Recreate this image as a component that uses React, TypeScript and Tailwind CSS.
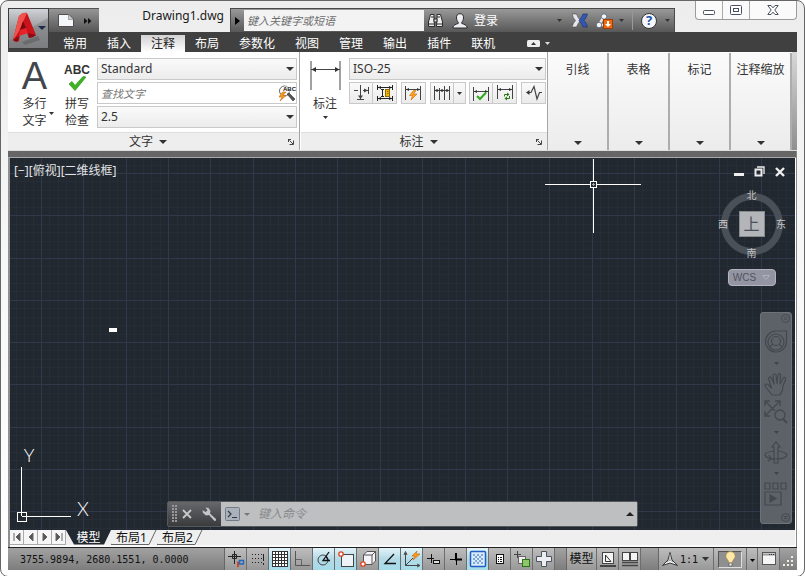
import type { ReactNode } from "react";

const UI = "font-['Noto_Sans','Noto_Sans_CJK_SC',sans-serif]";

function Caret({ w = 7, color = "#333", className = "" }: { w?: number; color?: string; className?: string }) {
  const h = Math.ceil(w / 2);
  return (
    <svg width={w} height={h} viewBox={`0 0 ${w} ${h}`} className={`pointer-events-none shrink-0 ${className}`} aria-hidden="true">
      <path d={`M0 0H${w}L${w / 2} ${h}Z`} fill={color} />
    </svg>
  );
}

function AppButton() {
  return (
    <button
      aria-label="应用程序菜单"
      className="absolute left-0 top-[7px] z-10 h-[41px] w-[41px] border border-[#3c3c3c] bg-linear-to-b from-[#cfd2d6] via-[#9a9b9e] to-[#7d7e80]"
    >
      <svg width="39" height="39" viewBox="0 0 39 39" aria-hidden="true">
        <path d="M0 32L39 9V39H0Z" fill="#77797c" opacity=".45" />
        <path d="M13 33L29 27L31 31L16 36Z" fill="#555" opacity=".5" />
        <path d="M10 7Q14 3 18 4L27 26Q24 29 20 29L18 24L11 26L10 32Q7 34 4 31Z" fill="#c9141b" />
        <path d="M10 7Q14 3 18 4L14 13Q10 24 4 31Z" fill="#f0524c" />
        <path d="M14 12L17 19L11 21Z" fill="#7a0a10" />
        <path d="M11 21L17 19L19 24L10 27Z" fill="#e8222a" />
        <path d="M10 27L9 32Q7 34 4 31Q8 28 10 27ZM19 24L27 26Q24 29 20 29Z" fill="#8a0c12" />
        <path d="M29 17H37L33 21Z" fill="#1c2a48" />
      </svg>
    </button>
  );
}

function WindowButtons() {
  return (
    <div className="flex h-[19px] w-[102px] shrink-0 self-start rounded-b-[4px] border border-t-0 border-[#9b9b9b] bg-[#fafafa]">
      <button aria-label="最小化" className="flex w-[27px] items-center justify-center border-r border-[#aaa]">
        <svg width="12" height="5" viewBox="0 0 12 5" className="mt-1"><rect x=".5" y=".5" width="11" height="4" rx="1" fill="#fff" stroke="#4b5060" /></svg>
      </button>
      <button aria-label="最大化" className="flex w-[27px] items-center justify-center border-r border-[#aaa]">
        <svg width="12" height="10" viewBox="0 0 12 10"><rect x=".5" y=".5" width="11" height="9" rx="1" fill="#fff" stroke="#4b5060" /><rect x="3.5" y="3.5" width="5" height="3" fill="#fff" stroke="#4b5060" /></svg>
      </button>
      <button aria-label="关闭" className="flex flex-1 items-center justify-center">
        <svg width="12" height="10" viewBox="0 0 12 10"><path d="M.8 .5H4L6 2.8L8 .5H11.2L7.8 5L11.2 9.5H8L6 7.2L4 9.5H.8L4.2 5Z" fill="#fff" stroke="#4b5060" /></svg>
      </button>
    </div>
  );
}

function TitleRow() {
  return (
    <div className="flex h-[31px] items-end pl-[41px]">
      <div className="flex h-6 w-[50px] shrink-0 items-center gap-2.5 border-t border-[#555] bg-linear-to-b from-[#969696] to-[#565656] pl-[9px]">
        <button aria-label="新建">
          <svg width="16" height="13" viewBox="0 0 16 13"><path d="M.5 .5H11L15.5 5V12.5H.5Z" fill="#f6f7f9" stroke="#4c4f55" /><path d="M10.500 .5V5.500H15.5Z" fill="#c9ccd2" stroke="#777" strokeWidth=".6" /></svg>
        </button>
        <button aria-label="更多">
          <svg width="8" height="6" viewBox="0 0 8 6"><path d="M0 0L3.500 3L0 6ZM4 0L7.500 3L4 6Z" fill="#111" /></svg>
        </button>
      </div>
      <h1 className="flex-1 self-start whitespace-nowrap pt-1.5 pr-1.5 text-right text-[12px] leading-[18px] text-[#1a1a1a]">Drawing1.dwg</h1>
      <div className="flex h-6 w-[445px] shrink-0 items-center border border-b-0 border-[#4a4a4a] bg-linear-to-b from-[#999] to-[#585858]">
        <button aria-label="展开搜索" className="flex w-[13px] justify-center">
          <svg width="5" height="8" viewBox="0 0 5 8"><path d="M0 0L5 4L0 8Z" fill="#000" /></svg>
        </button>
        <input
          aria-label="键入关键字或短语"
          placeholder="键入关键字或短语"
          className="h-[21px] w-[180px] bg-[#f3f3f4] px-[3px] text-[11px] italic outline-none placeholder:text-[#6c6c6c]"
        />
        <button aria-label="搜索" className="ml-[3px]">
          <svg width="17" height="16" viewBox="0 0 17 16"><path d="M3.500 1.500H7V5L7.500 13.500H1.500V9ZM13.500 1.500H10V5L9.500 13.500H15.500V9Z" fill="#eee" stroke="#2b2b2b" /><path d="M7 6H10V9H7Z" fill="#ddd" stroke="#2b2b2b" /><path d="M2 11H7M10 11H15M4 4H7M10 4H13" stroke="#2b2b2b" /></svg>
        </button>
        <button className="ml-2 flex items-center gap-1.5 text-[12px] leading-4 text-white">
          <svg width="16" height="16" viewBox="0 0 16 16"><path d="M8 .7C10.600 .7 11.700 2.500 11.500 5C11.400 7 10.500 8.400 9.800 9.200V10.500C12 11.300 15 12 15.300 15H.7C1 12 4 11.300 6.200 10.500V9.200C5.500 8.400 4.600 7 4.500 5C4.300 2.500 5.400 .7 8 .7Z" fill="#eceef1" stroke="#2b2b2b" /></svg>
          登录
        </button>
        <div className="ml-auto flex items-center">
          <Caret w={5} className="mr-2.5" />
          <button aria-label="Exchange">
            <svg width="16" height="15" viewBox="0 0 16 15"><path d="M0 1H4.500Q6 5 8.500 7.500Q6 10 4.500 14H0Q1 10 3.500 7.500Q1 5 0 1Z" fill="#e5e7ec" stroke="#444" strokeWidth=".6" /><path d="M15.500 1H11Q9.500 5 7 7.500Q9.500 10 11 14H15.500Q14.500 10 12 7.500Q14.500 5 15.500 1Z" fill="#3157b4" stroke="#1c2e66" strokeWidth=".6" /></svg>
          </button>
          <button aria-label="连接" className="ml-2 flex items-center gap-1.5">
            <svg width="17" height="16" viewBox="0 0 17 16"><path d="M7.500 4L3 12H11" fill="none" stroke="#e8eaee" strokeWidth="2.500" /><circle cx="8" cy="3.500" r="2.700" fill="#f4f5f8" stroke="#456" strokeWidth=".7" /><circle cx="3" cy="12" r="2.700" fill="#f4f5f8" stroke="#456" strokeWidth=".7" /><rect x="7.500" y="6.500" width="9" height="9" fill="#ee6a12" stroke="#a23c00" /><path d="M11 8H13V11H15L12 14L9 11H11Z" fill="#fff" /></svg>
            <Caret w={5} />
          </button>
          <span className="mx-2 h-[18px] w-px bg-[#999]" />
          <button aria-label="帮助" className="mr-1 flex items-center gap-2">
            <span className="flex h-4 w-4 items-center justify-center rounded-full border border-[#333] bg-[#f5f7fa] text-[13px] font-bold leading-none text-[#1e53ad]">?</span>
            <Caret w={5} />
          </button>
        </div>
      </div>
      <div className="w-5 shrink-0" />
      <WindowButtons />
    </div>
  );
}

const TABS = ["常用", "插入", "注释", "布局", "参数化", "视图", "管理", "输出", "插件", "联机"];

function TabRow() {
  return (
    <nav className="flex h-5 items-end bg-[#404040] pl-[45px]">
      {TABS.map((t) => (
        <button
          key={t}
          className={
            t === "注释"
              ? "h-[17px] px-2.5 text-[12px] leading-4 text-[#222] bg-linear-to-b from-[#d2d2d2] to-white"
              : "h-[17px] px-2.5 text-[12px] leading-4 text-white"
          }
        >
          {t}
        </button>
      ))}
      <button aria-label="最小化功能区" className="ml-[22px] flex h-[17px] items-center gap-[5px]">
        <svg width="13" height="7" viewBox="0 0 13 7"><rect width="13" height="7" rx="1.500" fill="#eee" /><path d="M4 5L6.500 2L9 5Z" fill="#333" /></svg>
        <Caret w={5} color="#ddd" />
      </button>
    </nav>
  );
}

function Combo({ value, label }: { value: string; label: string }) {
  return (
    <div className="relative h-[22px]">
      <select aria-label={label} className="block h-full w-full appearance-none border border-[#c9c9c9] bg-linear-to-b from-[#fafafa] to-[#ececec] pl-[3px] text-[12px] leading-[18px] text-[#333] outline-none">
        <option>{value}</option>
      </select>
      <Caret w={8} className="absolute right-[3px] top-[9px]" />
    </div>
  );
}

function PanelFooter({ title }: { title: string }) {
  return (
    <div className="flex h-[18px] items-center border-t border-[#ddd] bg-[#eee] pr-[5px] text-[12px] leading-4 text-[#333]">
      <button className="flex flex-1 items-center justify-center gap-1.5">
        {title}
        <Caret w={8} />
      </button>
      <button aria-label={`${title}设置`}>
        <svg width="6" height="6" viewBox="0 0 6 6"><path d="M0 .5H3M.5 0V3M1.500 1.500L5 5M5.500 1.500V5.500H1.500" stroke="#444" fill="none" /></svg>
      </button>
    </div>
  );
}

function TextPanel() {
  return (
    <section className="flex w-[292px] shrink-0 flex-col border-r border-[#a5a5a5]">
      <div className="flex flex-1 pt-1.5 pr-0.5">
        <button className="flex w-[53px] flex-col items-center pt-1 text-[12px] leading-[17px] text-[#333]">
          <span className="h-[33px] font-['Liberation_Sans',sans-serif] text-[38px] leading-[28px] text-[#41464d]">A</span>
          多行
          <span className="relative">
            文字
            <Caret w={5} className="absolute -right-[7px] top-0" />
          </span>
        </button>
        <button className="flex w-[32px] flex-col items-center pt-1 text-[12px] leading-[17px] text-[#333]">
          <span className="h-3 font-['Liberation_Sans',sans-serif] text-[12px] font-bold leading-4 text-[#333]">ABC</span>
          <svg width="17" height="21" viewBox="0 0 17 21"><path d="M0 10L3 7.500L6 11.500L14 2.500L17 3L6 16.500Z" fill="#3bb522" stroke="#1c8a0c" strokeWidth=".6" /></svg>
          <span>拼写</span>
          <span>检查</span>
        </button>
        <div className="ml-1 flex flex-1 flex-col gap-0.5">
          <Combo value="Standard" label="文字样式" />
          <div className="flex h-[22px] items-center border border-[#c9c9c9] bg-white">
            <input aria-label="查找文字" placeholder="查找文字" className="h-full min-w-0 flex-1 px-[3px] text-[11px] italic outline-none placeholder:text-[#777]" />
            <button aria-label="查找">
              <svg width="18" height="18" viewBox="0 0 18 18">
                <circle cx="6.500" cy="7" r="5" fill="#fff" stroke="#666" />
                <path d="M9 10L11 9L17 15L15 17Z" fill="#555" stroke="#333" strokeWidth=".6" />
                <text x="5" y="7" fontFamily="Liberation Sans" fontSize="6" fontWeight="bold" fill="#111" stroke="#fff" strokeWidth="1" paintOrder="stroke">ABC</text>
                <path d="M4.500 8L1 13H4L2 17L8 11.500H5L8 8Z" fill="#f59a1c" stroke="#c05a00" strokeWidth=".5" />
              </svg>
            </button>
          </div>
          <Combo value="2.5" label="文字高度" />
        </div>
      </div>
      <PanelFooter title="文字" />
    </section>
  );
}

function ToolIcon({ children }: { children: ReactNode }) {
  return (
    <svg width="18" height="18" viewBox="0 0 18 18" fill="none" stroke="#444" aria-hidden="true">
      {children}
    </svg>
  );
}

const TOOL = "flex w-[23px] items-center justify-center";
const GROUP = "flex h-[22px] border border-[#c9c9c9] bg-linear-to-b from-[#fafafa] to-[#ebebeb] divide-x divide-[#c9c9c9]";

function DimPanel() {
  return (
    <section className="flex min-w-0 flex-1 flex-col border-r border-[#a5a5a5] pl-px">
      <div className="flex flex-1 pt-1.5 pr-px">
        <button className="flex w-12 shrink-0 flex-col items-center pt-[3px] text-[12px] leading-[17px] text-[#333]">
          <svg width="31" height="34" viewBox="0 0 31 34"><path d="M1 0V29M30 0V29M1 8.500H30" stroke="#444" fill="none" /><path d="M1.500 8.500L6 6V11ZM29.500 8.500L25 6V11Z" fill="#333" /></svg>
          标注
          <Caret w={5} className="mt-1" />
        </button>
        <div className="flex min-w-0 flex-1 flex-col gap-0.5">
          <Combo value="ISO-25" label="标注样式" />
          <div className="flex justify-between">
            <div className={GROUP}>
              <button aria-label="打断" className={TOOL}>
                <ToolIcon><path d="M2 6.500H6M8.500 1V15M5 15.500H12M11 6.500H16M16.500 3V10" /><path d="M6 11.500H11L8.500 15ZM12 4.500V8.500L16 6.500Z" fill="#444" stroke="none" /></ToolIcon>
              </button>
              <button aria-label="调整间距" className={TOOL}>
                <ToolIcon><path d="M1.500 1V6M16.500 1V6M1.500 12V17M16.500 12V17M2 3.500H16M2 14.500H16M5 5.500H8M6.500 5.500V12.500M5 12.500H8" stroke="#222" /><path d="M2 3.500L5 2V5ZM16 3.500L13 2V5ZM2 14.500L5 13V16ZM16 14.500L13 13V16Z" fill="#222" stroke="none" /><rect x="9.500" y="5.500" width="4" height="7" fill="#f5b800" stroke="#8f6a00" /><path d="M11 7.500H12.500M11 9.500H12.500" stroke="#8f6a00" /></ToolIcon>
              </button>
            </div>
            <div className={GROUP}>
              <button aria-label="快速标注" className={TOOL}>
                <ToolIcon><path d="M1.500 2V16M16.500 2V16M2 5.500H16" /><path d="M2 5.500L5 4V7ZM16 5.500L13 4V7Z" fill="#333" stroke="none" /><path d="M9.500 6.500L5.500 11.500H8.500L7 16L13 10H9.500L12 6.500Z" fill="#ffa51f" stroke="#c76a00" strokeWidth=".6" /></ToolIcon>
              </button>
            </div>
            <div className={GROUP}>
              <button aria-label="连续" className={TOOL}>
                <ToolIcon><path d="M1.500 2V16M6.500 4V16M11.500 2V16M16.500 2V16M2 6.500H16" /><path d="M2 6.500L4 5V8ZM6 6.500L4 5V8ZM7 6.500L9 5V8ZM11 6.500L9 5V8ZM12 6.500L14 5V8ZM16 6.500L14 5V8Z" fill="#333" stroke="none" /></ToolIcon>
              </button>
              <button aria-label="更多连续" className="flex w-[11px] items-center justify-center"><Caret w={5} /></button>
            </div>
            <div className={GROUP}>
              <button aria-label="检验" className={TOOL}>
                <ToolIcon><path d="M1.500 3V17M16.500 3V17M2 7.500H16" /><path d="M2 7.500L5 6V9ZM16 7.500L13 6V9Z" fill="#333" stroke="none" /><path d="M5 12L8 15L14 8.500" stroke="#2fa81a" strokeWidth="2" /></ToolIcon>
              </button>
              <button aria-label="更新" className={TOOL}>
                <ToolIcon><path d="M1.500 1V15M16.500 1V15M2 5.500H16" /><path d="M2 5.500L5 4V7ZM16 5.500L13 4V7Z" fill="#333" stroke="none" /><path d="M8.500 12.500V10.500H11M13.500 12V14.500H11" stroke="#287a14" /><path d="M11 8.500V12.500L13.500 10.500ZM11 12.500V16.500L8.500 14.500Z" fill="#287a14" stroke="none" /></ToolIcon>
              </button>
            </div>
            <div className={GROUP}>
              <button aria-label="折弯" className={TOOL}>
                <ToolIcon><path d="M2 8.500H6L9 2.500L12 15L14.500 8.500H17" strokeWidth="1.200" /><path d="M1 8.500L4.500 6V11Z" fill="#333" stroke="none" /></ToolIcon>
              </button>
            </div>
          </div>
        </div>
      </div>
      <PanelFooter title="标注" />
    </section>
  );
}

function Ribbon() {
  return (
    <div className="flex h-[99px] border-b border-[#ddd] bg-white">
      <TextPanel />
      <DimPanel />
      {["引线", "表格", "标记", "注释缩放"].map((t) => (
        <button
          key={t}
          className="mt-px flex w-[61px] shrink-0 flex-col items-center justify-between border-r-2 border-[#adadad] bg-linear-to-b from-[#fbfbfb] to-[#ececec] pt-2 pb-[5px] text-[12px] leading-[18px] text-[#333]"
        >
          {t}
          <Caret w={8} />
        </button>
      ))}
      <div className="w-[5px] bg-linear-to-b from-[#d8d8d8] to-[#8f8f8f]" />
    </div>
  );
}

const LINES = Array.from({ length: 240 }, (_, i) => i);
const MINOR = LINES.filter((i) => i % 5 !== 0);
const MAJOR = LINES.filter((i) => i % 5 === 0);

function GridLines() {
  const draw = (list: number[], color: string) => (
    <g fill={color}>
      {list.map((i) => (
        <g key={i}>
          <rect x={Math.round(31 + (i - 5) * 8.47)} y="0" width="1" height="100%" />
          <rect x="0" y={Math.round(15 + (i - 5) * 8.45)} width="100%" height="1" />
        </g>
      ))}
    </g>
  );
  return (
    <svg className="absolute inset-0 h-full w-full" shapeRendering="crispEdges" aria-hidden="true">
      {draw(MINOR, "#262d36")}
      {draw(MAJOR, "#31384b")}
    </svg>
  );
}

function ViewCube() {
  return (
    <div className="absolute right-1.5 top-8 flex w-[75px] flex-col items-center text-[11px] text-[#c4c5c7]">
      <div className="relative flex h-[68px] w-full items-center justify-center">
        <span className="absolute h-[62px] w-[62px] rounded-full border-[7px] border-[#4a5058]" />
        <button className="relative flex h-[26px] w-[26px] items-center justify-center border border-[#888b8e] bg-[#b3b5b8] text-[16px] leading-none text-[#4a5158]">上</button>
        <span className="absolute -top-px text-[10px] leading-3">北</span>
        <span className="absolute -bottom-px text-[10px] leading-3">南</span>
        <span className="absolute left-1 text-[10px] leading-3">西</span>
        <span className="absolute right-[3px] text-[10px] leading-3">东</span>
      </div>
      <button className="mt-[11px] flex h-[17px] w-12 items-center justify-center gap-1.5 rounded-[4px] border border-[#b3b4c0] bg-[#9495a3] font-['Liberation_Sans',sans-serif] text-[10px] text-[#51535c]">
        WCS
        <svg width="8" height="5" viewBox="0 0 8 5"><path d="M.5 .5H7.500L4 4.500Z" fill="none" stroke="#b0b1bd" /></svg>
      </button>
    </div>
  );
}

function NavBar() {
  return (
    <div className="absolute bottom-1.5 right-[3px] flex h-[212px] w-8 flex-col items-center justify-between rounded-[3px] border border-[#6d7278] bg-[#5d6268] py-px">
      <button aria-label="关闭导航栏" className="mr-px self-end">
        <svg width="9" height="9" viewBox="0 0 9 9" fill="none" stroke="#484d53"><circle cx="4.500" cy="4.500" r="4" /><path d="M3 3L6 6M6 3L3 6" /></svg>
      </button>
      <button aria-label="导航控制盘">
        <svg width="24" height="24" viewBox="0 0 24 24" fill="none" stroke="#43484e" strokeWidth="1.200"><path d="M12 1H22.500V12A10.500 10.500 0 1 1 12 1Z" /><circle cx="12" cy="12" r="8" /><circle cx="12" cy="11" r="4.500" /><path d="M8.500 14L6 17.500M15.500 14L18 17.500" /></svg>
      </button>
      <Caret w={5} color="#3f444a" />
      <div className="flex flex-col gap-1">
        <button aria-label="平移">
          <svg width="24" height="24" viewBox="0 0 24 24" fill="none" stroke="#43484e" strokeWidth="1.200" strokeLinejoin="round"><path d="M8 23L1 14Q1 11 4 12.500L7.500 16L4.500 6.500Q5.500 4 7.500 6L10 12L9 3Q10.500 .5 12 3L13 11.500L14 2.500Q16 .5 16.500 3L16 12L19.500 5.500Q22 5 21.500 7.500L19 14L18.500 18L16 23Z" /></svg>
        </button>
        <button aria-label="缩放">
          <svg width="24" height="24" viewBox="0 0 24 24" fill="none" stroke="#43484e" strokeWidth="1.300"><path d="M1 6V1H6M11 1H16V6M1 11V16H6M1 1L11 11M16 1L1 16" /><circle cx="16" cy="15" r="5" /><path d="M19 19L23 23" strokeWidth="2" /></svg>
        </button>
      </div>
      <Caret w={5} color="#3f444a" />
      <button aria-label="动态观察">
        <svg width="24" height="23" viewBox="0 0 24 23" fill="none" stroke="#43484e" strokeWidth="1.200"><path d="M10 22V6H8L12 1L16 6H14V22Z" /><path d="M10 10Q1 11 1 14Q2 18 12 18Q22 18 23 14Q22 11 14 10M5 14L7 18L4 20" /></svg>
      </button>
      <Caret w={5} color="#3f444a" />
      <button aria-label="ShowMotion">
        <svg width="24" height="24" viewBox="0 0 24 24" fill="none" stroke="#43484e" strokeWidth="1.200"><path d="M1 1H6V7H1ZM9 1H14V7H9ZM17 1H22V7H17ZM1 10H17V23H1Z" /><path d="M6 13L12 16.500L6 20Z" fill="#43484e" /></svg>
      </button>
      <button aria-label="自定义" className="mr-px self-end">
        <svg width="9" height="9" viewBox="0 0 9 9" fill="none" stroke="#43484e"><circle cx="4.500" cy="4.500" r="4" /><path d="M2.500 3.500H6.500M3 5.500H6" /></svg>
      </button>
    </div>
  );
}

function CommandLine() {
  return (
    <div className="absolute inset-x-0 bottom-[3px] flex justify-center">
      <div className="flex h-[26px] w-3/5 rounded-[2px] border border-[#55585c] bg-linear-to-b from-[#66686b] to-[#3a3b3d]">
        <div className="flex w-[53px] shrink-0 items-center gap-1 pl-1">
          <svg width="6" height="18" viewBox="0 0 6 18" fill="#99999b">
            {[0, 3, 6, 9, 12, 15].map((y) => (
              <path key={y} d={`M0 ${y}H2V${y + 2}H0ZM3 ${y}H5V${y + 2}H3Z`} />
            ))}
          </svg>
          <button aria-label="关闭命令行" className="w-2.5">
            <svg width="10" height="10" viewBox="0 0 10 10"><path d="M1 1L9 9M9 1L1 9" stroke="#c9c9c9" strokeWidth="1.800" /></svg>
          </button>
          <button aria-label="命令行设置" className="ml-1.5">
            <svg width="15" height="15" viewBox="0 0 15 15"><path d="M3.500 .5L6.500 1L8.500 4L8 6.500L14 12Q14.500 14 12.500 14L7 8L4 8.500L1 6L.5 3L3.500 5L5.500 3.500Z" fill="#c4c5c7" /></svg>
          </button>
        </div>
        <div className="flex min-w-0 flex-1 items-center bg-[#bebfc1] pl-1">
          <button aria-label="最近使用的命令" className="flex items-center gap-1">
            <svg width="15" height="14" viewBox="0 0 15 14"><rect x=".5" y=".5" width="14" height="13" rx="1" fill="#a9b1bb" stroke="#727b86" /><path d="M3 4L6 7L3 10M7 10.500H12" fill="none" stroke="#333a44" strokeWidth="1.200" /></svg>
            <Caret w={6} color="#777" />
          </button>
          <input aria-label="键入命令" placeholder="键入命令" className="ml-2 h-full min-w-0 flex-1 bg-transparent pb-0.5 text-[12px] italic outline-none placeholder:text-[#87898b]" />
          <button aria-label="展开历史" className="mr-[3px]">
            <svg width="8" height="4" viewBox="0 0 8 4"><path d="M0 4L4 0L8 4Z" fill="#222" /></svg>
          </button>
        </div>
      </div>
    </div>
  );
}

function Canvas() {
  return (
    <main className="relative min-h-[372px] flex-1 overflow-hidden bg-[#212830]">
      <GridLines />
      <div className="absolute left-1 top-1 text-[12px] leading-[18px] text-[#e2e3e4]">[−][俯视][二维线框]</div>
      <div className="absolute right-2.5 top-2 flex items-center gap-2.5">
        <button aria-label="最小化视口" className="pt-1.5"><svg width="10" height="3" viewBox="0 0 10 3"><rect width="10" height="3" fill="#eee" /></svg></button>
        <button aria-label="还原视口"><svg width="11" height="11" viewBox="0 0 11 11" fill="none" stroke="#eee"><path d="M3 1H10V8" strokeWidth="1.300" /><rect x="1.500" y="3.500" width="6" height="6" strokeWidth="2" /></svg></button>
        <button aria-label="关闭视口"><svg width="10" height="10" viewBox="0 0 10 10"><path d="M1 1L9 9M9 1L1 9" stroke="#eee" strokeWidth="2.400" /></svg></button>
      </div>
      <svg className="absolute left-[535px] top-px" width="96" height="75" viewBox="0 0 96 75" shapeRendering="crispEdges" fill="none" stroke="#fff" aria-hidden="true">
        <path d="M0 25.500H96M48.500 0V74" />
        <rect x="45.500" y="22.500" width="6" height="6" fill="#212830" />
        <path d="M47 25.500H50M48.500 24V27" stroke="#aaa" />
      </svg>
      <div className="absolute left-[99px] top-[170px] h-1 w-2 bg-white" />
      <svg className="absolute bottom-[5px] left-[7px]" width="80" height="86" viewBox="0 -10 80 86" fill="none" stroke="#fff" aria-hidden="true">
        <path d="M4.500 18V67M4.500 67.500H54M.500 63.500H9.500V72.500H.500Z" shapeRendering="crispEdges" />
        <text x="12" y="13" textAnchor="middle" fontFamily="Lato" fontWeight="300" fontSize="18" fill="#fff" stroke="none">Y</text>
        <text x="66" y="67" textAnchor="middle" fontFamily="Lato" fontWeight="300" fontSize="19" fill="#fff" stroke="none">X</text>
      </svg>
      <ViewCube />
      <NavBar />
      <CommandLine />
    </main>
  );
}

function LayoutTabs() {
  const arrows = ["M2 1V9M8 1L4 5L8 9Z", "M7 1L3 5L7 9Z", "M3 1L7 5L3 9Z", "M8 1V9M2 1L6 5L2 9Z"];
  const names = ["首个", "上一个", "下一个", "末个"];
  return (
    <div className="flex h-[17px] border-b-2 border-[#fafafa] bg-[#efefef] text-[12px] leading-[15px] text-[#111]">
      {arrows.map((d, i) => (
        <button key={i} aria-label={names[i]} className="flex w-3.5 items-center justify-center border-r border-b border-[#aaa] bg-[#f6f6f6]">
          <svg width="10" height="10" viewBox="0 0 10 10"><path d={d} fill="#555" stroke="#666" strokeWidth="1" /></svg>
        </button>
      ))}
      <button className="relative flex w-[45px] items-center justify-center text-white">
        <svg className="absolute inset-0" width="45" height="15" viewBox="0 0 45 15"><path d="M0 0H45L38 14.500H8Z" fill="#212830" /></svg>
        <span className="relative">模型</span>
      </button>
      {["布局1", "布局2"].map((t) => (
        <button key={t} className="relative flex w-[46px] items-center pl-[5px]">
          <svg className="absolute inset-0" width="46" height="15" viewBox="0 0 46 15"><path d="M-3 5L0 14.500H38L45 0" fill="none" stroke="#666" /></svg>
          <span className="relative">{t}</span>
        </button>
      ))}
    </div>
  );
}

const STATUS: { name: string; on?: boolean; icon: ReactNode }[] = [
  { name: "推断约束", icon: <><path d="M7.500 1V14M1 6.500H14M5.500 4.500H9.500V8.500H5.500Z" stroke="#222" /><path d="M11 17V11.500" stroke="#d4431c" strokeWidth="2" /><path d="M12.500 10.500H16.500V14H12.500Z" stroke="#2369c0" strokeWidth="1.500" /></> },
  { name: "捕捉", icon: <><path d="M3 4.500H13M3 8.500H13M3 12.500H13" stroke="#222" strokeDasharray="1 2" /><path d="M14.500 4V11M14.500 13V15" stroke="#222" /></> },
  { name: "栅格", on: true, icon: <><rect x="1.500" y="1.500" width="15" height="15" fill="#fff" stroke="#333" /><path d="M4.500 1V17M7.500 1V17M10.500 1V17M13.500 1V17M1 4.500H17M1 7.500H17M1 10.500H17M1 13.500H17" stroke="#333" /></> },
  { name: "正交", icon: <><path d="M2.500 1V15.500H17" stroke="#555" /><path d="M3 9.500H8.500V15" stroke="#666" /></> },
  { name: "极轴", on: true, icon: <><circle cx="8" cy="10" r="5" stroke="#444" /><path d="M14 2L8 10.500H15M11 6L13 10" stroke="#111" strokeWidth="1.300" /></> },
  { name: "对象捕捉", on: true, icon: <><rect x="4.500" y="4.500" width="12" height="12" fill="#eef3f8" stroke="#444" /><circle cx="4" cy="4" r="2.200" fill="#fff" stroke="#e0441a" strokeWidth="1.300" /></> },
  { name: "三维捕捉", icon: <><path d="M4.500 5L8 1.500H16.500V11L13 14.500H4.500ZM4.500 5H13V14.500M13 5L16.500 1.500" fill="#f3f3f8" stroke="#555" /><circle cx="4" cy="14" r="2.200" fill="#fff" stroke="#e0441a" strokeWidth="1.300" /></> },
  { name: "对象追踪", on: true, icon: <path d="M13 4L4 13.500H15" stroke="#111" strokeWidth="1.300" /> },
  { name: "动态UCS", on: true, icon: <><path d="M2.500 3V15.500H16M2.500 15.500L10 8" stroke="#444" /><path d="M1 5L2.500 1.500L4 5M14 14L17 15.500L14 17" stroke="#444" /><path d="M14 1L9 6H12L10 10L17 4H13Z" fill="#ff9d1c" stroke="#c76000" strokeWidth=".6" /></> },
  { name: "动态输入", icon: <><path d="M6.500 4V13M2 8.500H9" stroke="#111" /><rect x="8.500" y="10.500" width="6" height="3" fill="#ddd" stroke="#111" /></> },
  { name: "线宽", icon: <><path d="M9.500 3V15" stroke="#000" /><path d="M3 9.500H15" stroke="#000" /><path d="M9 3V9.500H15" stroke="#000" strokeWidth="2" /></> },
  { name: "透明度", on: true, icon: <><rect x="1.500" y="1.500" width="15" height="15" rx="1" fill="#dceafb" stroke="#1f5fc4" strokeWidth="1.500" /><path d="M4 5H15M4 9H15M4 13H15" stroke="#7aaadc" strokeWidth="2" strokeDasharray="2 2" /><path d="M6 7H14M6 11H14" stroke="#7aaadc" strokeWidth="2" strokeDasharray="2 2" /></> },
  { name: "快捷特性", icon: <><rect x="5.500" y="4.500" width="7" height="9" fill="#fff" stroke="#111" /><path d="M7 7.500H8M9 7.500H11M7 9.500H8M9 9.500H11M7 11.500H8M9 11.500H11" stroke="#111" /></> },
  { name: "选择循环", icon: <><path d="M4.500 1V8M1 4.500H8" stroke="#444" /><rect x="5.500" y="6.500" width="7" height="7" fill="#eee" stroke="#666" /><rect x="9.500" y="9.500" width="7" height="7" fill="#8fc66a" stroke="#2c701a" /></> },
  { name: "注释监视器", icon: <path d="M6.500 1.500H11.500V6.500H16.500V11.500H11.500V16.500H6.500V11.500H1.500V6.500H6.500Z" fill="#eceef2" stroke="#4a5260" /> },
];

const OFF = "bg-linear-to-b from-[#bdbdbd] to-[#989898]";

function StatusIcon({ children }: { children: ReactNode }) {
  return <svg width="18" height="18" viewBox="0 0 18 18" fill="none" className="shrink-0" aria-hidden="true">{children}</svg>;
}

function StatusBar() {
  return (
    <footer className="flex h-[23px] border-t border-[#222] bg-linear-to-b from-[#a2a2a2] to-[#7d7d7d]">
      <div className="flex min-w-[217px] flex-1 items-center whitespace-pre border-r border-[#666] pl-3 font-['DejaVu_Sans_Mono',monospace] text-[10px] text-[#111]">3755.9894, 2680.1551, 0.0000</div>
      {STATUS.map((s) => (
        <button
          key={s.name}
          aria-label={s.name}
          aria-pressed={!!s.on}
          className={
            s.on
              ? "flex w-[22px] shrink-0 items-center justify-center border-r border-[#6d6d6d] bg-linear-to-b from-[#e2f3f8] via-[#b3dae6] to-[#a5dcea]"
              : "flex w-[22px] shrink-0 items-center justify-center border-r border-[#6d6d6d] bg-linear-to-b from-[#bdbdbd] to-[#989898]"
          }
        >
          <StatusIcon>{s.icon}</StatusIcon>
        </button>
      ))}
      <div className="w-3 shrink-0 border-r border-[#666]" />
      <button className={`w-[30px] shrink-0 border-r border-[#6d6d6d] text-[12px] text-[#111] ${OFF}`}>模型</button>
      <button aria-label="快速查看布局" className={`flex w-[22px] shrink-0 items-center justify-center border-r border-[#6d6d6d] ${OFF}`}>
        <StatusIcon><rect x="3.500" y="2.500" width="11" height="11" fill="#f4f4f4" stroke="#444" /><path d="M6.500 5V11.500H12Z" stroke="#333" /><path d="M1 16H17" stroke="#444" strokeWidth="2" /></StatusIcon>
      </button>
      <button aria-label="快速查看图形" className={`flex w-[22px] shrink-0 items-center justify-center border-r border-[#6d6d6d] ${OFF}`}>
        <StatusIcon><rect x="1.500" y="2.500" width="7" height="8" fill="#f4f4f4" stroke="#444" /><rect x="9.500" y="2.500" width="7" height="8" fill="#f4f4f4" stroke="#444" /><path d="M1 12.500H17M1 15.500H17" stroke="#444" strokeWidth="1.500" /></StatusIcon>
      </button>
      <div className="w-[18px] shrink-0 border-r border-[#666]" />
      <button className={`flex w-[55px] shrink-0 items-center gap-0.5 border-r border-[#6d6d6d] pl-[3px] font-['DejaVu_Sans_Mono',monospace] text-[10px] text-[#111] ${OFF}`}>
        <svg width="16" height="15" viewBox="0 0 16 15"><path d="M8 .5L10 8L15.500 13.500L8 11L.5 13.500L6 8Z" fill="#f7f7f7" stroke="#333" /><path d="M8 2V8L11 10M8 8L5 10" stroke="#999" fill="none" /></svg>
        1:1
        <Caret w={7} className="ml-0.5" />
      </button>
      <button aria-label="注释可见性" className={`flex w-[33px] shrink-0 items-center justify-center border-r border-[#6d6d6d] ${OFF}`}>
        <span className="flex h-[17px] w-6 items-center justify-center border border-r-[#ddd] border-b-[#ddd] border-l-[#555] border-t-[#555] bg-[#8f8f8f]">
          <svg width="11" height="16" viewBox="0 0 11 16"><path d="M5.500 .5A4.500 4.500 0 0 1 9 8Q7.500 9.500 7 12H4Q3.500 9.500 2 8A4.500 4.500 0 0 1 5.500 .5Z" fill="#ffe9a8" stroke="#a98d43" strokeWidth=".7" /><path d="M4 12H7V15H4Z" fill="#eee" stroke="#555" strokeWidth=".7" /></svg>
        </span>
      </button>
      <button aria-label="状态栏菜单" className={`flex w-[11px] shrink-0 items-center justify-center border-r border-[#6d6d6d] pt-0.5 ${OFF}`}><Caret w={5} color="#000" /></button>
      <button aria-label="全屏显示" className={`flex w-[22px] shrink-0 items-center justify-center border-r border-[#6d6d6d] ${OFF}`}>
        <StatusIcon><rect x="2.500" y="2.500" width="13" height="12" fill="#f4f5f7" stroke="#555" /><path d="M3 4.500H15" stroke="#999" strokeWidth="2" /><path d="M9 4.500H15" stroke="#333" strokeDasharray="1 1" /></StatusIcon>
      </button>
      <div className="flex w-[17px] shrink-0 items-end justify-center pb-0.5">
        <svg width="12" height="12" viewBox="0 0 12 12" fill="#f1efe2"><path d="M8 0H10V2H8ZM4 4H6V6H4ZM8 4H10V6H8ZM0 8H2V10H0ZM4 8H6V10H4ZM8 8H10V10H8Z" /></svg>
      </div>
    </footer>
  );
}

export default function App() {
  return (
    <div className={`flex min-h-screen flex-col bg-white ${UI}`}>
      <div className="flex flex-1 flex-col rounded-lg border border-[#666] bg-linear-to-b from-[#ededed] via-[#f7f8f8] to-white px-[7px] pb-[6px]">
        <header className="relative">
          <AppButton />
          <TitleRow />
          <TabRow />
        </header>
        <Ribbon />
        <div className="flex flex-1 flex-col border-r border-[#888]">
          <div className="h-[7px] border-b border-[#a8a8a8] bg-[#666]" />
          <div className="flex flex-1 flex-col border-l-2 border-[#8f8f8f]">
            <div className="flex flex-1 flex-col border-r border-white">
              <Canvas />
              <LayoutTabs />
            </div>
          </div>
        </div>
        <StatusBar />
      </div>
    </div>
  );
}
